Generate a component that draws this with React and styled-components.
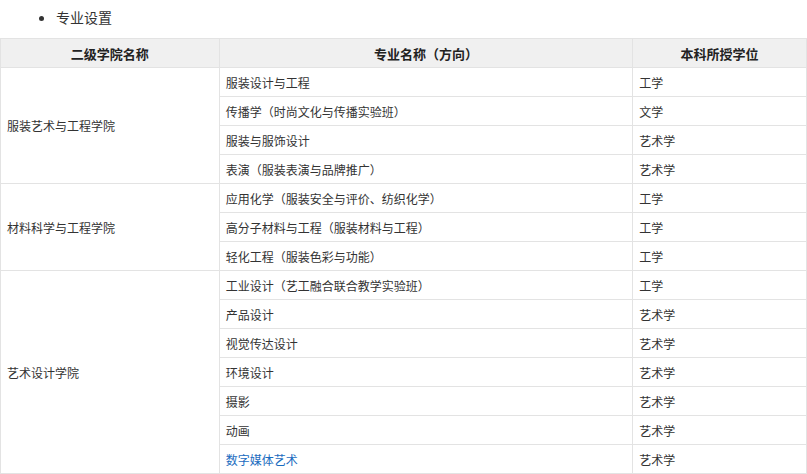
import React from 'react';
import styled, { createGlobalStyle } from 'styled-components';

const GlobalStyle = createGlobalStyle`
  body {
    margin: 0;
    background: #fff;
    font-family: "Microsoft YaHei", "Noto Sans CJK SC", "Noto Sans", sans-serif;
    color: #333;
  }
`;

const Section = styled.ul`
  margin: 0 0 11px;
  padding: 7px 0 0 56px;
  font-size: 14px;
  line-height: 20px;
  color: #333;
`;

const Table = styled.table`
  width: 807px;
  border-collapse: collapse;
  font-size: 12px;
  color: #333;
`;

const Th = styled.th`
  height: 28px;
  padding: 0 6px;
  background: #f0f0f0;
  border: 1px solid #e3e3e3;
  font-size: 13px;
  font-weight: bold;
  text-align: center;
  color: #222;
`;

const Td = styled.td`
  height: 28px;
  padding: 0 6px;
  border: 1px solid #e3e3e3;
  text-align: left;
  vertical-align: middle;
  color: ${props => (props.$link ? '#1a6cc0' : '#333')};
`;

const data = [
  {
    college: '服装艺术与工程学院',
    majors: [
      ['服装设计与工程', '工学'],
      ['传播学（时尚文化与传播实验班）', '文学'],
      ['服装与服饰设计', '艺术学'],
      ['表演（服装表演与品牌推广）', '艺术学'],
    ],
  },
  {
    college: '材料科学与工程学院',
    majors: [
      ['应用化学（服装安全与评价、纺织化学）', '工学'],
      ['高分子材料与工程（服装材料与工程）', '工学'],
      ['轻化工程（服装色彩与功能）', '工学'],
    ],
  },
  {
    college: '艺术设计学院',
    majors: [
      ['工业设计（艺工融合联合教学实验班）', '工学'],
      ['产品设计', '艺术学'],
      ['视觉传达设计', '艺术学'],
      ['环境设计', '艺术学'],
      ['摄影', '艺术学'],
      ['动画', '艺术学'],
      ['数字媒体艺术', '艺术学', true],
    ],
  },
];

export default function App() {
  return (
    <>
      <GlobalStyle />
      <Section>
        <li>专业设置</li>
      </Section>
      <Table>
        <colgroup>
          <col style={{ width: 219 }} />
          <col style={{ width: 414 }} />
          <col style={{ width: 174 }} />
        </colgroup>
        <thead>
          <tr>
            <Th>二级学院名称</Th>
            <Th>专业名称（方向）</Th>
            <Th>本科所授学位</Th>
          </tr>
        </thead>
        <tbody>
          {data.map(group =>
            group.majors.map(([name, degree, link], i) => (
              <tr key={group.college + name}>
                {i === 0 && <Td rowSpan={group.majors.length}>{group.college}</Td>}
                <Td $link={link}>{name}</Td>
                <Td>{degree}</Td>
              </tr>
            ))
          )}
        </tbody>
      </Table>
    </>
  );
}
